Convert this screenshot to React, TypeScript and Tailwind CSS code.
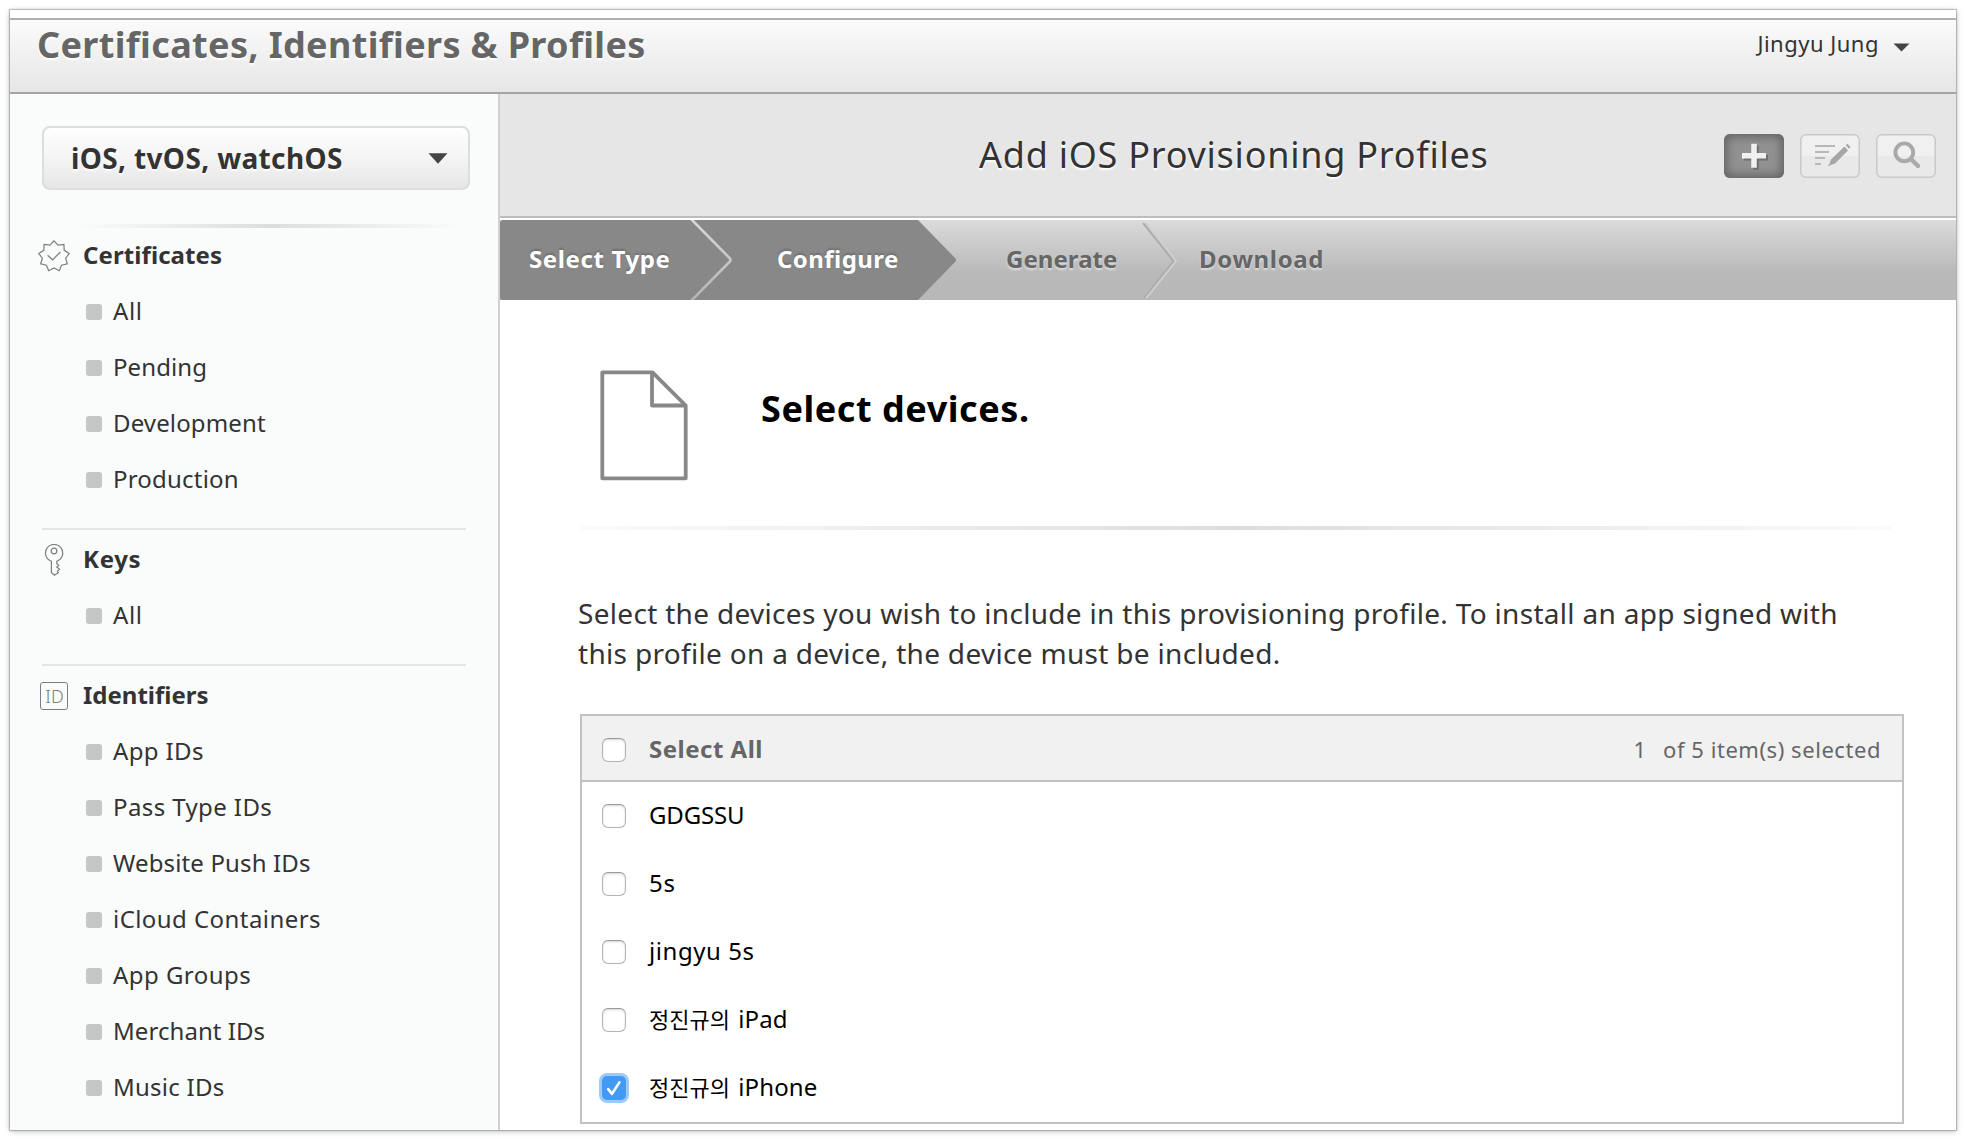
import type { ReactNode } from 'react';

const starPoints = Array.from({ length: 18 }, (_, i) => {
  const r = i % 2 === 0 ? 15.4 : 11.8;
  const a = (i * Math.PI) / 9 - Math.PI / 2;
  return `${(16 + r * Math.cos(a)).toFixed(2)},${(16.2 + r * Math.sin(a)).toFixed(2)}`;
}).join(' ');

function SealIcon() {
  return (
    <svg width="32" height="32" viewBox="0 0 32 32" fill="none" stroke="#7c7d7d" strokeWidth="1.2">
      <polygon points={starPoints} />
      <path d="M9.6 15.2 14.6 19.8 22.4 12" />
    </svg>
  );
}

function KeyIcon() {
  return (
    <svg width="32" height="32" viewBox="0 0 32 32" fill="none" stroke="#7c7d7d" strokeWidth="1.2">
      <path d="M13.4 17.2A8.6 8.6 0 1 1 18.8 17.2V19.6L20.8 21.2 18.8 23 21.6 25.2 19.4 27.2 20.4 28.6 16.4 31.2 13.4 28.4Z" />
      <circle cx="16" cy="7" r="2.8" />
    </svg>
  );
}

function IdIcon() {
  return (
    <span className="flex size-7 items-center justify-center rounded-[3px] border border-[#7c7d7d] pl-px text-[18px] leading-none font-light text-[#7c7d7d]">
      ID
    </span>
  );
}

function SectionHead({ icon, children, tracking }: { icon: ReactNode; children: string; tracking: string }) {
  return (
    <div className="flex h-14 items-center">
      <span className="flex w-8 shrink-0 justify-center">{icon}</span>
      <h3 className={`ml-[13px] pb-0.5 text-2xl leading-7 font-bold text-[#333] ${tracking}`}>{children}</h3>
    </div>
  );
}

function NavItems({ items }: { items: [string, string][] }) {
  return (
    <ul>
      {items.map(([label, tracking]) => (
        <li key={label} className="flex h-14 items-center">
          <span className="ml-12 size-4 rounded-[3px] bg-[#c6c6c6]" />
          <span className={`ml-[11px] pb-0.5 text-2xl leading-7 whitespace-nowrap text-[#333] ${tracking}`}>{label}</span>
        </li>
      ))}
    </ul>
  );
}

function Divider() {
  return <div className="mt-5 mb-0.5 ml-1 h-0.5 w-[424px] bg-[#e5e7e6]" />;
}

function Checkbox({ checked }: { checked?: boolean }) {
  if (checked) {
    return (
      <span className="flex size-6 shrink-0 items-center justify-center rounded-[5px] bg-[#429af6] shadow-[0_0_0_3px_#9ccafa]">
        <svg width="24" height="24" viewBox="0 0 24 24" fill="none" stroke="#fff" strokeWidth="2.6" strokeLinecap="round" strokeLinejoin="round">
          <path d="M6.2 13.2 10 17.8 17.4 6.4" />
        </svg>
      </span>
    );
  }
  return (
    <span className="size-6 shrink-0 rounded-md border border-[#b4b4b4] border-t-[#9b9b9b] bg-white shadow-[inset_0_1px_2px_rgba(0,0,0,0.18)]" />
  );
}

function Row({ children, checked }: { children: ReactNode; checked?: boolean }) {
  return (
    <div className="flex h-[68px] items-center pl-5">
      <Checkbox checked={checked} />
      <span className="ml-[23px] pb-0.5 text-2xl leading-7 whitespace-nowrap text-black">{children}</span>
    </div>
  );
}

export default function App() {
  return (
    <div className="h-[1140px] w-[1966px] overflow-hidden bg-white p-2.5 font-['Noto_Sans','Noto_Sans_CJK_KR',sans-serif]">
      <div className="flex h-[1120px] w-[1946px] flex-col overflow-hidden bg-white pt-2 shadow-[0_0_1px_1px_rgba(0,0,0,0.2),0_1px_6px_rgba(0,0,0,0.28)]">
        <header className="flex h-[76px] shrink-0 justify-between border-y-2 border-t-[#b0b0b0] border-b-[#a5a5a5] bg-linear-to-b from-[#fbfbfb] to-[#e6e6e6]">
          <h1 className="mt-px ml-[27px] h-12 text-4xl leading-[48px] font-bold tracking-[0.35px] whitespace-nowrap text-[#666] [text-shadow:0_2px_2px_#fff]">
            Certificates, Identifiers &amp; Profiles
          </h1>
          <div className="mr-[46px] flex h-12 items-center">
            <span className="mb-0.5 text-[22px] leading-7 tracking-[0.5px] text-[#333]">Jingyu Jung</span>
            <svg className="mt-1.5 ml-[14px]" width="17" height="9" viewBox="0 0 17 9">
              <path d="M.5.5h16L8.500 8.500z" fill="#444" />
            </svg>
          </div>
        </header>

        <div className="flex min-h-0 flex-1">
          <aside className="w-[490px] shrink-0 border-r-2 border-[#d0d1d1] bg-[#fafcfb] pl-7">
            <div className="mt-8 ml-1 flex h-16 w-[428px] items-center justify-between rounded-lg border-2 border-[#dcdddd] bg-linear-to-b from-[#fefefe] from-0% via-[#f4f4f4] via-50% to-[#e6e6e6] to-100% pr-5 pl-[27px]">
              <span className="text-[28px] leading-8 font-bold tracking-[0.36px] text-[#333] [text-shadow:0_2px_2px_#fff]">
                iOS, tvOS, watchOS
              </span>
              <svg width="20" height="11" viewBox="0 0 20 11">
                <path d="M.5.3h19L10 10.700z" fill="#444" />
              </svg>
            </div>
            <div className="mt-[34px] ml-10 h-1 w-96 bg-linear-to-r from-transparent via-[#dcdddd] to-transparent" />

            <SectionHead icon={<SealIcon />} tracking="tracking-[0.09px]">Certificates</SectionHead>
            <NavItems
              items={[
                ['All', 'tracking-[0.6px]'],
                ['Pending', 'tracking-[0.1px]'],
                ['Development', 'tracking-[0.14px]'],
                ['Production', 'tracking-[0.2px]'],
              ]}
            />
            <Divider />
            <SectionHead icon={<KeyIcon />} tracking="tracking-[0.7px]">Keys</SectionHead>
            <NavItems items={[['All', 'tracking-[0.6px]']]} />
            <Divider />
            <SectionHead icon={<IdIcon />} tracking="tracking-[0px]">Identifiers</SectionHead>
            <NavItems
              items={[
                ['App IDs', 'tracking-[0.37px]'],
                ['Pass Type IDs', 'tracking-[0.4px]'],
                ['Website Push IDs', 'tracking-[0.14px]'],
                ['iCloud Containers', 'tracking-[0.44px]'],
                ['App Groups', 'tracking-[0.45px]'],
                ['Merchant IDs', 'tracking-[0.06px]'],
                ['Music IDs', 'tracking-[0.25px]'],
              ]}
            />
          </aside>

          <main className="flex min-w-0 flex-1 flex-col">
            <div className="flex h-[124px] shrink-0 items-center border-b-2 border-[#bdbdbd] bg-[#e6e6e6]">
              <h2 className="ml-[479px] w-[745px] text-4xl leading-[48px] tracking-[0.76px] whitespace-nowrap text-[#333] [text-shadow:0_2px_2px_#fff]">
                Add iOS Provisioning Profiles
              </h2>
              <div className="flex gap-4 pt-0.5">
                <button className="h-11 w-[60px] rounded-md bg-[#919191] shadow-[inset_0_0_10px_3px_#646464]">
                  <svg width="60" height="44" viewBox="0 0 60 44">
                    <g fill="none" strokeWidth="5.500">
                      <path d="M20 23.700h24M32 11.700v24" stroke="#707070" />
                      <path d="M18 21.700h24M30 9.700v24" stroke="#f1f1f1" />
                    </g>
                  </svg>
                </button>
                <button className="h-11 w-[60px] rounded-md bg-linear-to-b from-[#f0f0f0] from-50% to-[#e9e9e9] to-50% shadow-[inset_0_0_0_1.5px_#c9c9c9]">
                  <svg width="60" height="44" viewBox="0 0 60 44" fill="#a6a6a6">
                    <path d="M15 12h20M15 18h14M15 24h10M15 30h6" stroke="#b8b8b8" strokeWidth="2" />
                    <path d="M31 25.500 44.500 12.500 48 16.500 35 29.500 30 31.200 28.300 32.400 28 31.600 29.400 30z" />
                    <path d="M45.700 11.200 47.500 9.700 50.500 13 49 14.800z" />
                  </svg>
                </button>
                <button className="h-11 w-[60px] rounded-md bg-linear-to-b from-[#f0f0f0] from-50% to-[#e9e9e9] to-50% shadow-[inset_0_0_0_1.5px_#c9c9c9]">
                  <svg width="60" height="44" viewBox="0 0 60 44" fill="none" stroke="#a9a9a9" strokeLinecap="round">
                    <circle cx="28.300" cy="18.300" r="8.900" strokeWidth="3.900" />
                    <path d="M35.200 25.200 42 32" strokeWidth="4.400" />
                  </svg>
                </button>
              </div>
            </div>

            <nav className="mt-0.5 flex h-20 shrink-0 bg-linear-to-b from-[#dbdbdb] from-0% via-[#b9b9b9] via-65% to-[#b8b8b8] to-100% text-2xl font-bold whitespace-nowrap">
              <div className="flex w-[188px] items-center rounded-l-[3px] bg-[#888] pb-0.5 pl-[29px] tracking-[0.62px] text-white [text-shadow:0_-2px_2px_#707070]">
                Select Type
              </div>
              <svg className="bg-[#888]" width="46" height="80" viewBox="0 0 46 80" fill="none">
                <defs>
                  <linearGradient id="chevron" x1="0" y1="0" x2="0" y2="1">
                    <stop offset="0" stopColor="#dadada" />
                    <stop offset="1" stopColor="#b4b4b4" />
                  </linearGradient>
                </defs>
                <path d="M3 -1 42 38.500Q43 40 42 41.500L3 81" stroke="url(#chevron)" strokeWidth="2.600" />
              </svg>
              <div className="flex w-[184px] items-center bg-[#888] pb-0.5 pl-[43px] tracking-[0.44px] text-white [text-shadow:0_-2px_2px_#707070]">
                Configure
              </div>
              <svg width="38" height="80" viewBox="0 0 38 80">
                <path d="M0 0 37.500 38.500Q38.500 40 37.500 41.500L0 80z" fill="#888" />
              </svg>
              <div className="flex w-[184px] items-center pb-0.5 pl-[50px] tracking-[0.05px] text-[#666] [text-shadow:0_2px_2px_#ddd]">
                Generate
              </div>
              <svg width="38" height="80" viewBox="0 0 38 80" fill="none">
                <path d="M5.500 3 36 41 6 78" stroke="#d0d0d0" strokeWidth="2" />
                <path d="M3 3 33.500 41 4 78" stroke="#adadad" strokeWidth="2" />
              </svg>
              <div className="flex items-center pb-0.5 pl-[21px] tracking-[0.65px] text-[#666] [text-shadow:0_2px_2px_#ddd]">
                Download
              </div>
            </nav>

            <section className="flex h-[226px] shrink-0 items-start pt-[70px]">
              <svg className="ml-[100px]" width="88" height="112" viewBox="0 0 88 112" fill="none" stroke="#888" strokeWidth="3.800" strokeLinejoin="round">
                <path d="M2.300 2.300H52.500L85.700 35.500V108.300H2.300z" />
                <path d="M52 3V35.500H85" />
              </svg>
              <h2 className="mt-[15px] ml-[73px] text-4xl leading-[48px] font-bold tracking-[0.56px] text-black">
                Select devices.
              </h2>
            </section>
            <div className="ml-20 h-1 w-[1312px] shrink-0 bg-linear-to-r from-[#fafbfb] via-[#dcdddd] to-[#fafbfb]" />

            <p className="mt-[63px] ml-[78px] text-[28px] leading-10 tracking-[0.31px] whitespace-nowrap text-[#333]">
              Select the devices you wish to include in this provisioning profile. To install an app signed with
              <br />
              this profile on a device, the device must be included.
            </p>

            <div className="mt-[41px] ml-20 h-[410px] w-[1324px] shrink-0 border-2 border-[#c2c2c2]">
              <div className="flex h-[66px] items-center border-b-2 border-[#c2c2c2] bg-[#f1f1f1] pt-1 pl-5 text-[#666]">
                <Checkbox />
                <span className="ml-[23px] pb-0.5 text-2xl leading-7 font-bold tracking-[0.5px]">Select All</span>
                <span className="mb-0.5 mr-[17px] ml-auto text-[22px] leading-7">1</span>
                <span className="mb-0.5 mr-[21px] text-[22px] leading-7 tracking-[0.55px]">of 5 item(s) selected</span>
              </div>
              <Row><span className="tracking-[-0.16px]">GDGSSU</span></Row>
              <Row><span className="tracking-[0.8px]">5s</span></Row>
              <Row><span className="tracking-[0.56px]">jingyu 5s</span></Row>
              <Row><span className="text-[22px]">정진규의</span><span className="ml-0.5 tracking-[0.1px]"> iPad</span></Row>
              <Row checked><span className="text-[22px]">정진규의</span><span className="ml-0.5 tracking-[0.1px]"> iPhone</span></Row>
            </div>
          </main>
        </div>
      </div>
    </div>
  );
}
